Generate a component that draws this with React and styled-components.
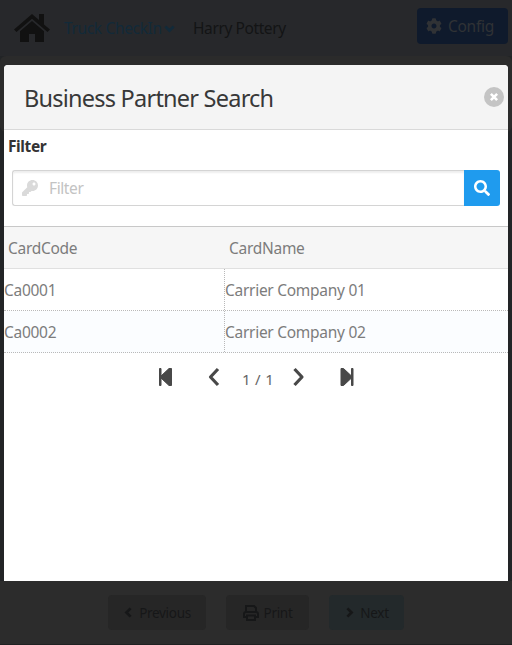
import React from "react";
import styled, { createGlobalStyle } from "styled-components";
import { FaCog, FaKey, FaSearch } from "react-icons/fa";

const Global = createGlobalStyle`
  * { box-sizing: border-box; }
  body { margin: 0; background: #27282b; overflow: hidden; }
  button { font: inherit; letter-spacing: inherit; padding: 0; border: 0; }
  svg { display: block; flex: none; }
`;

const Page = styled.div`
  height: 100vh;
  position: relative;
  display: flex;
  flex-direction: column;
  font-family: "Segoe UI", "Noto Sans", sans-serif;
  font-size: 15.5px;
  letter-spacing: -0.28px;
`;

const TopBar = styled.header`
  height: 56px;
  flex: none;
  display: flex;
  align-items: center;
  padding: 0 4px 0 14px;
  background: #27282b;
`;

const HomeIcon = styled.svg`
  width: 36px;
  height: 28px;
  fill: #111;
`;

const ModuleLink = styled.span`
  display: flex;
  align-items: center;
  gap: 2px;
  margin-left: 14px;
  width: 129px;
  color: #122a39;
  white-space: nowrap;
  letter-spacing: -0.35px;
`;

const UserName = styled.span`
  color: #131415;
  white-space: nowrap;
  letter-spacing: -0.4px;
`;

const ConfigButton = styled.button`
  width: 91px;
  height: 36px;
  margin: -4px 0 0 auto;
  border-radius: 4px;
  display: flex;
  align-items: center;
  gap: 6px;
  padding-left: 9px;
  background: #0f1a2c;
  color: #303235;
`;

const Backdrop = styled.div`
  flex: 1;
  display: flex;
  flex-direction: column;
  background: #222426;
`;

const HeadingPanel = styled.div`
  height: 76px;
  border-radius: 6px;
  background: #2b2b2b;
`;

const BottomBar = styled.footer`
  height: 64px;
  margin-top: auto;
  padding: 14px 0 0 108px;
  display: flex;
  gap: 20px;
  background: #2c2c2c;
  border-bottom: 1px solid #202122;
`;

const ActionButton = styled.button`
  width: ${(p) => p.$width};
  height: 35px;
  border-radius: 4px;
  display: flex;
  align-items: center;
  justify-content: center;
  gap: 5px;
  background: ${(p) => (p.$primary ? "#23292b" : "#262626")};
  color: #161718;
  font-size: 13.5px;
  letter-spacing: -0.3px;
`;

const Dialog = styled.section`
  position: absolute;
  top: 65px;
  left: 4px;
  right: 4px;
  height: 516px;
  display: flex;
  flex-direction: column;
  background: #fff;
  border-radius: 4px 4px 0 0;
  overflow: hidden;
`;

const DialogHeader = styled.header`
  height: 65px;
  flex: none;
  display: flex;
  align-items: center;
  justify-content: space-between;
  padding: 2px 4px 0 20px;
  background: #f4f4f4;
  border-bottom: 1px solid #d9d9d9;
`;

const Title = styled.h1`
  margin: 0;
  font-size: 23.5px;
  font-weight: 400;
  line-height: 32px;
  letter-spacing: -0.77px;
  color: #383838;
`;

const CloseButton = styled.button`
  width: 20px;
  height: 20px;
  border-radius: 50%;
  margin-top: -3px;
  display: grid;
  place-items: center;
  background: #c4c4c4;
  color: #fff;
`;

const FilterLabel = styled.label`
  height: 40px;
  padding: 6px 0 0 4px;
  line-height: 21px;
  font-weight: 700;
  font-size: 15.5px;
  letter-spacing: -0.4px;
  color: #333;
`;

const SearchBox = styled.div`
  height: 36px;
  margin: 0 8px 20px;
  display: flex;
`;

const Field = styled.div`
  flex: 1;
  display: flex;
  align-items: center;
  gap: 11px;
  padding-left: 9px;
  border: 1px solid #d4d4d4;
  border-right: 0;
  border-radius: 3px 0 0 3px;
  box-shadow: inset 0 2px 2px #00000012;
  color: #c3c3c3;
  letter-spacing: -0.4px;
  svg { color: #dadada; }
`;

const SearchButton = styled.button`
  width: 36px;
  border-radius: 0 3px 3px 0;
  display: grid;
  place-items: center;
  background: #1f9bee;
  color: #fff;
`;

const TableHead = styled.div`
  height: 43px;
  display: grid;
  grid-template-columns: 221px 1fr;
  background: #f6f6f6;
  border-top: 1px solid #c8c8c8;
  border-bottom: 1px solid #e0e0e0;
  color: #7c7c7c;
`;

const HeadCell = styled.span`
  padding-left: 4px;
  line-height: 43px;
`;

const TableRow = styled.div`
  height: 42px;
  display: grid;
  grid-template-columns: 221px 1fr;
  background: ${(p) => (p.$alternate ? "#fbfdff" : "#fff")};
  border-bottom: 1px dotted #b9b9b9;
  color: #7c7c7c;
`;

const Cell = styled.span`
  height: 41px;
  line-height: 43px;
  border-right: ${(p) => (p.$divided ? "1px dotted #b9b9b9" : "0")};
`;

const Pager = styled.nav`
  height: 48px;
  padding-left: 1px;
  display: grid;
  grid-template-columns: 48px 48px 37px 48px 48px;
  justify-content: center;
  align-items: center;
  justify-items: center;
  color: #484848;
`;

const PageCount = styled.span`
  margin: 4px 0 0 3px;
  white-space: nowrap;
  font-size: 15px;
  letter-spacing: 0.3px;
  color: #666;
`;

const SHAPES = {
  down: "M2 5l6 6 6-6",
  left: "M11 2 5 8l6 6",
  right: "M5 2l6 6-6 6",
  cross: "M3 3l10 10M13 3 3 13",
};

const StrokeIcon = ({ shape, size, weight = 3.5 }) => (
  <svg width={size} height={size} viewBox="0 0 16 16" fill="none" stroke="currentColor" strokeWidth={weight}>
    <path d={SHAPES[shape]} />
  </svg>
);

const PrintIcon = () => (
  <svg width="16" height="16" viewBox="0 0 16 16" fill="none" stroke="currentColor" strokeWidth="2">
    <path d="M3 7V1h8l2 2v4M3 12H1V9q0-2 2-2h10q2 0 2 2v3h-2" />
    <path d="M4 10.5h8V15H4z" />
  </svg>
);

const PagerArrow = ({ d }) => (
  <svg width="20" height="20" viewBox="0 0 20 20" fill="none" stroke="currentColor" strokeWidth="3.2" strokeLinejoin="round">
    <path d={d} />
  </svg>
);

const PagerEnd = ({ d }) => (
  <svg width="20" height="20" viewBox="0 0 20 20" fill="currentColor" stroke="currentColor" strokeLinejoin="round">
    <path d={d} />
  </svg>
);

const rows = [
  ["Ca0001", "Carrier Company 01"],
  ["Ca0002", "Carrier Company 02"],
];

export default function App() {
  return (
    <Page>
      <Global />
      <TopBar>
        <HomeIcon viewBox="0 0 36 28">
          <path d="M18 0 25 6V0h5v10.4l6 5-2.5 2.6L18 4.7 2.5 18 0 15.4Z" />
          <path d="M18 7 30 17.2V28h-9v-8h-6v8H6V17.2Z" />
        </HomeIcon>
        <ModuleLink>Truck CheckIn<StrokeIcon shape="down" size={11} weight={4} /></ModuleLink>
        <UserName>Harry Pottery</UserName>
        <ConfigButton><FaCog size={16} />Config</ConfigButton>
      </TopBar>
      <Backdrop>
        <HeadingPanel />
        <BottomBar>
          <ActionButton $width="98px"><StrokeIcon shape="left" size={11} weight={4} />Previous</ActionButton>
          <ActionButton $width="83px"><PrintIcon />Print</ActionButton>
          <ActionButton $width="75px" $primary><StrokeIcon shape="right" size={11} weight={4} />Next</ActionButton>
        </BottomBar>
      </Backdrop>
      <Dialog role="dialog">
        <DialogHeader>
          <Title>Business Partner Search</Title>
          <CloseButton aria-label="Close"><StrokeIcon shape="cross" size={10} weight={4.2} /></CloseButton>
        </DialogHeader>
        <FilterLabel>Filter</FilterLabel>
        <SearchBox>
          <Field><FaKey size={16} />Filter</Field>
          <SearchButton aria-label="Search"><FaSearch size={16} /></SearchButton>
        </SearchBox>
        <TableHead>
          <HeadCell>CardCode</HeadCell>
          <HeadCell>CardName</HeadCell>
        </TableHead>
        {rows.map(([code, name], i) => (
          <TableRow key={code} $alternate={i % 2 === 1}>
            <Cell $divided>{code}</Cell>
            <Cell>{name}</Cell>
          </TableRow>
        ))}
        <Pager>
          <PagerEnd d="M3.500 1.500h1.500v7.500L13 1.500h2.500v17H13L5 11v7.500H3.500Z" />
          <PagerArrow d="M14 2 6.500 10l7.500 8" />
          <PageCount>1 / 1</PageCount>
          <PagerArrow d="M5.500 2l7.500 8-7.500 8" />
          <PagerEnd d="M16 1.500H14.500v7.500L6.500 1.500H4v17h2.500L14.500 11v7.500h1.500Z" />
        </Pager>
      </Dialog>
    </Page>
  );
}
